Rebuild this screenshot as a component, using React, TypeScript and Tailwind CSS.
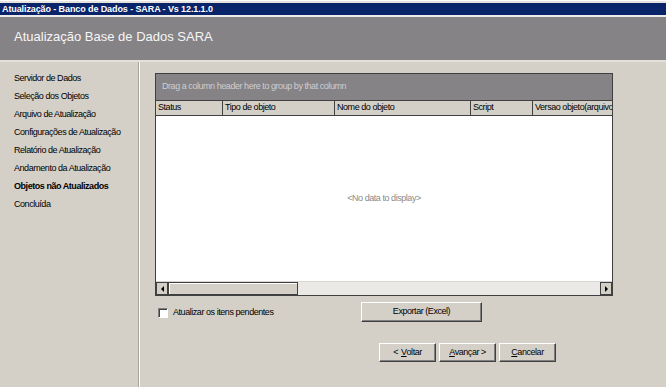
import React from "react";

const small = "font-['Liberation_Sans',Arial,sans-serif] text-[9px] tracking-[-0.45px]";

function NavButton({ children }: { children: React.ReactNode }) {
  return (
    <button
      className={`${small} h-[19px] w-[57px] bg-[#d4d0c8] text-black border border-t-white border-l-white border-r-[#404040] border-b-[#404040] shadow-[inset_-1px_-1px_0_#808080] flex items-center justify-center`}
    >
      {children}
    </button>
  );
}

const cols = [
  { name: "Status", w: 66 },
  { name: "Tipo de objeto", w: 112 },
  { name: "Nome do objeto", w: 136 },
  { name: "Script", w: 62 },
  { name: "Versao objeto(arquivo)", w: 81 },
];

const steps = [
  "Servidor de Dados",
  "Seleção dos Objetos",
  "Arquivo de Atualização",
  "Configurações de Atualização",
  "Relatório de Atualização",
  "Andamento da Atualização",
  "Objetos não Atualizados",
  "Concluída",
];

export default function App() {
  return (
    <div className="w-[666px] h-[387px] bg-[#d4d0c8] flex flex-col overflow-hidden">
      {/* title bar */}
      <div className="h-[3px] bg-[#e6e3de] border-t border-white" />
      <div className="h-[12px] bg-[#0a246a] flex items-center pl-[2px]">
        <span className="font-['Liberation_Sans',Arial,sans-serif] text-[9px] font-bold tracking-[-0.1px] text-white leading-none">
          Atualização - Banco de Dados - SARA - Vs 12.1.1.0
        </span>
      </div>
      <div className="h-[2px] bg-[#eeece8]" />
      {/* header */}
      <div className="h-[43px] bg-[#858386] flex items-center pl-[14px] pb-[4px]">
        <span className="font-['Liberation_Sans',Arial,sans-serif] text-[13px] text-[#f6f6f6] leading-none">
          Atualização Base de Dados SARA
        </span>
      </div>
      <div className="h-[2px] bg-[#e4e1dc]" />
      {/* body */}
      <div className="flex flex-1">
        <div className="w-[140px] border-r border-r-white">
          <div className="h-full w-[139px] border-r border-r-[#a8a49c] pt-[8px] pl-[14px] flex flex-col">
            {steps.map((s, i) => (
              <div
                key={s}
                className={`${small} h-[18px] flex items-center text-black ${i === 6 ? "font-bold tracking-[-0.2px]" : ""}`}
              >
                {s}
              </div>
            ))}
          </div>
        </div>
        <div className="flex-1 flex flex-col pl-[15px] pt-[11px]">
          {/* grid */}
          <div className="w-[458px] h-[223px] border border-[#404040] bg-white flex flex-col">
            <div className="h-[26px] bg-[#858386] flex items-center pl-[6px]">
              <span className={`${small} text-[#cfcdd0]`}>Drag a column header here to group by that column</span>
            </div>
            <div className="h-[16px] flex border-t border-b border-[#404040] bg-[#d4d0c8] overflow-hidden">
              {cols.map((c, i) => (
                <div
                  key={c.name}
                  style={{ width: c.w }}
                  className={`${small} shrink-0 h-full flex items-center pl-[2px] whitespace-nowrap overflow-hidden text-black ${i > 0 ? "border-l border-[#404040]" : ""}`}
                >
                  {c.name}
                </div>
              ))}
            </div>
            <div className="flex-1 flex items-center justify-center">
              <span className={`${small} text-[#8a8a8a] mt-[1px]`}>&lt;No data to display&gt;</span>
            </div>
            <div className="h-[14px] flex bg-[#ebe9e5] border-t border-[#d8d6d2]">
              <div className="w-[12px] h-full border border-[#404040] bg-[#d4d0c8] flex items-center justify-center">
                <div className="w-0 h-0 border-y-[3px] border-y-transparent border-r-[3px] border-r-black" />
              </div>
              <div className="w-[130px] h-full border border-[#404040] bg-[#d4d0c8] shadow-[inset_1px_1px_0_#fff]" />
              <div className="flex-1" />
              <div className="w-[12px] h-full border border-[#404040] bg-[#d4d0c8] flex items-center justify-center">
                <div className="w-0 h-0 border-y-[3px] border-y-transparent border-l-[3px] border-l-black" />
              </div>
            </div>
          </div>
          {/* checkbox + export */}
          <div className="flex items-start mt-[6px]">
            <div className="w-[206px] flex items-center pl-[3px] pt-[4px]">
              <div className="w-[10px] h-[10px] bg-white border border-t-[#808080] border-l-[#808080] border-r-white border-b-white shadow-[inset_1px_1px_0_#404040]" />
              <span className={`${small} ml-[5px] text-black`}>Atualizar os itens pendentes</span>
            </div>
            <button
              className={`${small} h-[20px] w-[121px] bg-[#d4d0c8] text-black border border-t-white border-l-white border-r-[#404040] border-b-[#404040] shadow-[inset_-1px_-1px_0_#808080] flex items-center justify-center`}
            >
              Exportar (Excel)
            </button>
          </div>
          {/* nav buttons */}
          <div className="flex gap-[3px] mt-[21px] pl-[224px]">
            <NavButton>
              &lt; <span className="underline ml-[3px]">V</span>oltar
            </NavButton>
            <NavButton>
              <span className="underline">A</span>vançar &gt;
            </NavButton>
            <NavButton>
              <span className="underline">C</span>ancelar
            </NavButton>
          </div>
        </div>
      </div>
    </div>
  );
}
